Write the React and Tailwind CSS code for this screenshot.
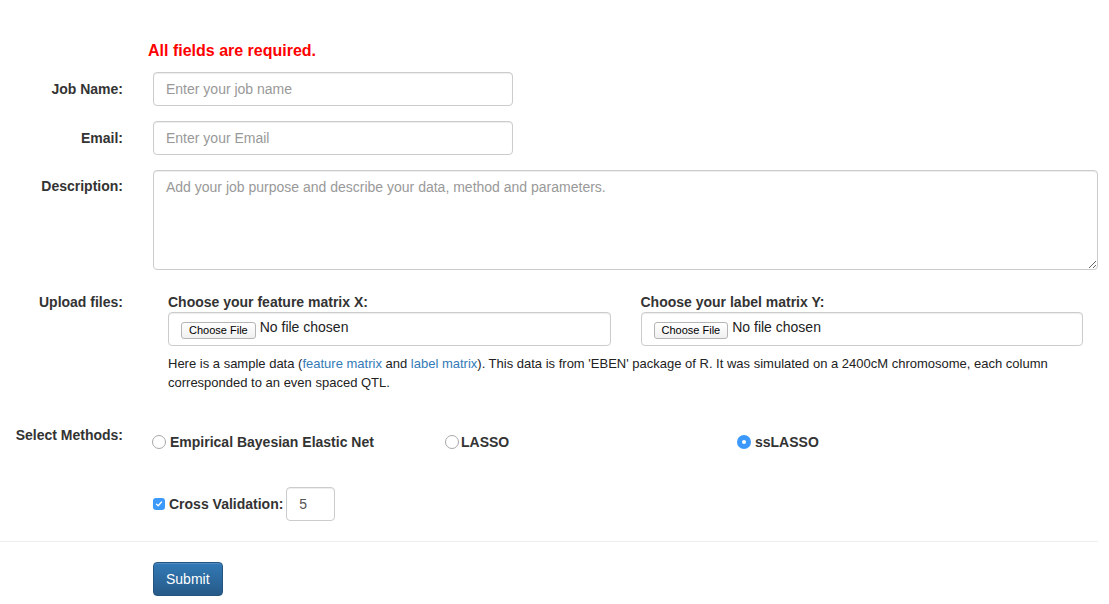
import React from "react";

function Radio({ checked }) {
  if (checked) {
    return (
      <span className="inline-flex items-center justify-center w-[14px] h-[14px] rounded-full bg-[#3b99fc] shrink-0">
        <span className="w-[4px] h-[4px] rounded-full bg-white" />
      </span>
    );
  }
  return <span className="inline-block w-[14px] h-[14px] rounded-full border border-[#a8a8a8] bg-white shrink-0" />;
}

function FileBox({ title }) {
  return (
    <div className="flex-1 min-w-0">
      <div className="font-bold leading-[20px]">{title}</div>
      <div className="h-[34px] border border-[#ccc] rounded-[4px] flex items-center pl-[12px] shadow-[inset_0_1px_1px_rgba(0,0,0,0.075)]">
        <span className="inline-flex items-center h-[17px] px-[7px] border border-[#b5b5b5] rounded-[3px] bg-gradient-to-b from-white to-[#f0f0f0] text-[11px] text-black leading-none mt-[2px]">
          Choose File
        </span>
        <span className="ml-[4px] text-[14px] text-[#222] -mt-[3px]">No file chosen</span>
      </div>
    </div>
  );
}

export default function App() {
  const labelCls = "w-[153px] pr-[30px] text-right font-bold shrink-0";
  const inputCls =
    "h-[34px] border border-[#ccc] rounded-[4px] px-[12px] text-[14px] text-[#555] placeholder:text-[#999] outline-none shadow-[inset_0_1px_1px_rgba(0,0,0,0.075)] font-['Liberation_Sans',Arial,sans-serif]";
  return (
    <div className="w-[1098px] bg-white text-[14px] text-[#333] font-['Liberation_Sans',Arial,sans-serif] pt-[40px] pb-[8px]">
      <div className="ml-[148px] text-[16px] font-bold text-[#ff0000] leading-[22px] mb-[10px]">
        All fields are required.
      </div>

      <div className="flex mb-[15px]">
        <div className={labelCls + " pt-[7px] leading-[20px]"}>Job Name:</div>
        <input className={inputCls + " w-[360px]"} placeholder="Enter your job name" />
      </div>

      <div className="flex mb-[15px]">
        <div className={labelCls + " pt-[7px] leading-[20px]"}>Email:</div>
        <input className={inputCls + " w-[360px]"} placeholder="Enter your Email" />
      </div>

      <div className="flex mb-[22px]">
        <div className={labelCls + " pt-[6px] leading-[20px]"}>Description:</div>
        <textarea
          className={inputCls + " flex-1 h-[100px] py-[6px] leading-[20px] block"}
          placeholder="Add your job purpose and describe your data, method and parameters."
        />
      </div>

      <div className="flex">
        <div className={labelCls + " leading-[20px]"}>Upload files:</div>
        <div className="flex-1 px-[15px]">
          <div className="flex gap-[30px]">
            <FileBox title="Choose your feature matrix X:" />
            <FileBox title="Choose your label matrix Y:" />
          </div>
          <p className="mt-[8px] text-[13px] leading-[19px] text-[#222]">
            Here is a sample data (<a className="text-[#337ab7]">feature matrix</a> and{" "}
            <a className="text-[#337ab7]">label matrix</a>). This data is from 'EBEN' package of R. It was
            simulated on a 2400cM chromosome, each column corresponded to an even spaced QTL.
          </p>
        </div>
      </div>

      <div className="flex mt-[33px]">
        <div className={labelCls + " leading-[20px]"}>Select Methods:</div>
        <div className="flex pt-[7px] -ml-[1px]">
          <div className="w-[293px] flex items-center gap-[4px] font-bold leading-[20px]">
            <Radio />
            <span>Empirical Bayesian Elastic Net</span>
          </div>
          <div className="w-[292px] flex items-center gap-[2px] font-bold leading-[20px]">
            <Radio />
            <span>LASSO</span>
          </div>
          <div className="flex items-center gap-[4px] font-bold leading-[20px]">
            <Radio checked />
            <span>ssLASSO</span>
          </div>
        </div>
      </div>

      <div className="flex items-center ml-[153px] mt-[35px]">
        <span className="inline-flex items-center justify-center w-[12px] h-[12px] rounded-[3px] bg-[#3b99fc] shrink-0">
          <svg width="8" height="8" viewBox="0 0 8 8">
            <path d="M1.5 4.2 L3.2 5.8 L6.5 2" stroke="white" strokeWidth="1.3" fill="none" strokeLinecap="round" strokeLinejoin="round" />
          </svg>
        </span>
        <span className="ml-[4px] font-bold">Cross Validation:</span>
        <input className={inputCls + " w-[49px] ml-[3px]"} defaultValue="5" />
      </div>

      <div className="border-t border-[#eee] mt-[20px]" />

      <div className="ml-[153px] mt-[20px]">
        <button className="h-[34px] px-[12px] rounded-[4px] border border-[#245580] bg-gradient-to-b from-[#337ab7] to-[#265a88] text-white text-[14px] shadow-[inset_0_1px_0_rgba(255,255,255,0.15)]">
          Submit
        </button>
      </div>
    </div>
  );
}
